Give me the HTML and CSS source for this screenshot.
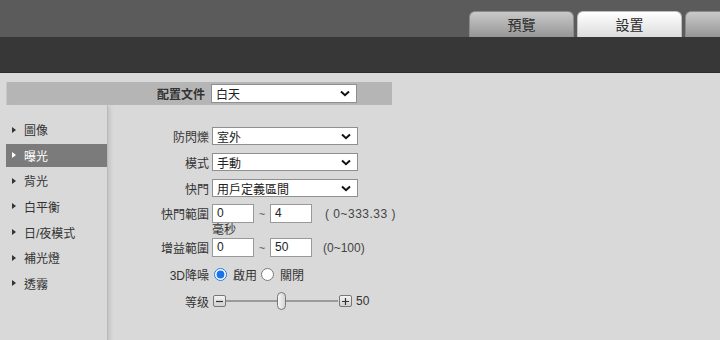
FILE: index.html
```html
<!DOCTYPE html>
<html lang="zh-Hant">
<head>
  <meta charset="UTF-8" />
  <title>設置 - 曝光</title>
  <link rel="stylesheet" href="styles.css">
</head>
<body>
  <div class="topbar">
    <div class="tabs">
      <div class="tab">預覽</div>
      <div class="tab active">設置</div>
      <div class="tab last"></div>
    </div>
  </div>
  <div class="subbar"></div>

  <div class="main">
    <div class="profile-bar">
      <span class="profile-label">配置文件</span>
      <div class="select profile-select"><span>白天</span><svg width="10" height="7" viewBox="0 0 10 7"><path d="M1 1.5 L5 5.2 L9 1.5" fill="none" stroke="#111" stroke-width="2"/></svg></div>
    </div>

    <div class="content">
      <ul class="sidebar">
        <li><span class="arrow"></span>圖像</li>
        <li class="selected"><span class="arrow"></span>曝光</li>
        <li><span class="arrow"></span>背光</li>
        <li><span class="arrow"></span>白平衡</li>
        <li><span class="arrow"></span>日/夜模式</li>
        <li><span class="arrow"></span>補光燈</li>
        <li><span class="arrow"></span>透霧</li>
      </ul>

      <div class="form">
        <div class="row">
          <label>防閃爍</label>
          <div class="select"><span>室外</span><svg width="10" height="7" viewBox="0 0 10 7"><path d="M1 1.5 L5 5.2 L9 1.5" fill="none" stroke="#111" stroke-width="2"/></svg></div>
        </div>
        <div class="row">
          <label>模式</label>
          <div class="select"><span>手動</span><svg width="10" height="7" viewBox="0 0 10 7"><path d="M1 1.5 L5 5.2 L9 1.5" fill="none" stroke="#111" stroke-width="2"/></svg></div>
        </div>
        <div class="row">
          <label>快門</label>
          <div class="select"><span>用戶定義區間</span><svg width="10" height="7" viewBox="0 0 10 7"><path d="M1 1.5 L5 5.2 L9 1.5" fill="none" stroke="#111" stroke-width="2"/></svg></div>
        </div>
        <div class="row range-row first-range">
          <label>快門範圍</label>
          <div class="text-input">0</div>
          <span class="tilde">~</span>
          <div class="text-input">4</div>
          <span class="hint wide">( 0~333.33 )</span>
        </div>
        <div class="unit">毫秒</div>
        <div class="row range-row">
          <label>增益範圍</label>
          <div class="text-input">0</div>
          <span class="tilde">~</span>
          <div class="text-input">50</div>
          <span class="hint">(0~100)</span>
        </div>
        <div class="row radio-row">
          <label>3D降噪</label>
          <input type="radio" name="nr" checked><span class="radio-text">啟用</span>
          <input type="radio" name="nr"><span class="radio-text">關閉</span>
        </div>
        <div class="row slider-row">
          <label>等级</label>
          <div class="step-btn">
            <svg width="9" height="9" viewBox="0 0 9 9"><path d="M1 4.5 H8" stroke="#333" stroke-width="1.2"/></svg>
          </div>
          <div class="track">
            <div class="thumb"></div>
          </div>
          <div class="step-btn">
            <svg width="9" height="9" viewBox="0 0 9 9"><path d="M1 4.5 H8 M4.5 1 V8" stroke="#333" stroke-width="1.2"/></svg>
          </div>
          <span class="value">50</span>
        </div>
      </div>
    </div>
  </div>
</body>
</html>
```

FILE: styles.css
```css
body {
  margin: 0;
  background: #d9d9d9;
  font-family: "Liberation Sans", "Noto Sans CJK TC", sans-serif;
  font-size: 12px;
  color: #333;
  height: 340px;
  overflow: hidden;
}

.topbar { height: 37px; background: #5b5b5b; display: flex; justify-content: flex-end; align-items: flex-end; }
.tabs { display: flex; gap: 3px; }
.tab {
  width: 105px;
  height: 26px;
  border-radius: 6px 6px 0 0;
  background: linear-gradient(#c9c9c9, #969696);
  border: 1px solid #8a8a8a;
  border-bottom: none;
  box-sizing: border-box;
  text-align: center;
  line-height: 26px;
  font-size: 14px;
  color: #2a2a2a;
}
.tab.active { background: linear-gradient(#ffffff, #dcdcdc); border-color: #bdbdbd; }
.tab.last { width: 35px; border-radius: 6px 0 0 0; border-right: none; }

.subbar { height: 35px; background: #373737; border-bottom: 1px solid #2c2c2c; }

.main { padding: 9px 0 0 6px; }

.profile-bar {
  width: 386px;
  height: 23px;
  background: #b5b5b5;
  border-left: 1px solid #c8c8c8;
  box-sizing: border-box;
  display: flex;
  align-items: center;
  justify-content: flex-end;
  padding-right: 35px;
  gap: 6px;
}
.profile-label { font-weight: bold; font-size: 12px; color: #333; }

.select {
  width: 146px;
  height: 18px;
  background: #fff;
  border: 1px solid #8f8f8f;
  box-sizing: border-box;
  display: flex;
  align-items: center;
  justify-content: space-between;
  padding: 0 6px 0 4px;
  font-size: 12px;
  color: #222;
}
.profile-select { height: 19px; }

.content { display: flex; }

.sidebar {
  list-style: none;
  margin: 0;
  padding: 13px 0 0 0;
  width: 101px;
  height: 230px;
  border-right: 1px solid #b9b9b9;
  box-shadow: 3px 0 4px -1px #c2c2c2;
}
.sidebar li {
  height: 23px;
  margin-bottom: 2.67px;
  display: flex;
  align-items: center;
  padding-left: 6px;
  font-size: 12px;
  color: #333;
}
.sidebar li.selected { background: #7b7b7b; color: #fff; }
.arrow {
  width: 0;
  height: 0;
  border-top: 3.5px solid transparent;
  border-bottom: 3.5px solid transparent;
  border-left: 4px solid #333;
  margin-right: 8px;
}
.sidebar li.selected .arrow { border-left-color: #fff; }

.form { padding: 22px 0 0 0; }
.row { display: flex; align-items: center; height: 18px; margin-bottom: 8px; }
.row label { width: 101px; text-align: right; padding-right: 3px; color: #333; }

.range-row { height: 19px; margin-bottom: 0; }
.first-range { margin-top: -1px; }
.text-input {
  width: 42px;
  height: 19px;
  box-sizing: border-box;
  background: #fff;
  border: 1px solid #999;
  padding-left: 4px;
  line-height: 17px;
  color: #222;
}
.tilde { width: 16px; text-align: center; color: #555; font-size: 11px; }
.hint { margin-left: 11px; color: #444; }
.hint.wide { letter-spacing: 0.5px; margin-left: 13px; }
.unit { padding-left: 104px; height: 15px; line-height: 15px; color: #333; }

.radio-row { margin-top: 9px; height: 16px; margin-bottom: 11px; }
.radio-row input { margin: 0 6px 0 2px; width: 13px; height: 13px; accent-color: #1a73e8; }
.radio-text { margin-right: 2px; color: #333; }

.slider-row { height: 16px; }
.step-btn {
  width: 13px;
  height: 12px;
  margin-left: 1px;
  border: 1px solid #777;
  border-radius: 2px;
  background: linear-gradient(#f4f4f4, #d0d0d0);
  box-sizing: border-box;
  display: flex;
  align-items: center;
  justify-content: center;
}
.track {
  width: 112px;
  height: 2px;
  background: #9a9a9a;
  display: flex;
  align-items: center;
  justify-content: center;
}
.thumb {
  width: 9px;
  height: 18px;
  border: 1px solid #777;
  border-radius: 5px;
  background: linear-gradient(90deg, #f6f6f6, #d4d4d4);
  box-sizing: border-box;
  margin-left: -2px;
}
.value { margin-left: 4px; color: #333; }
```
